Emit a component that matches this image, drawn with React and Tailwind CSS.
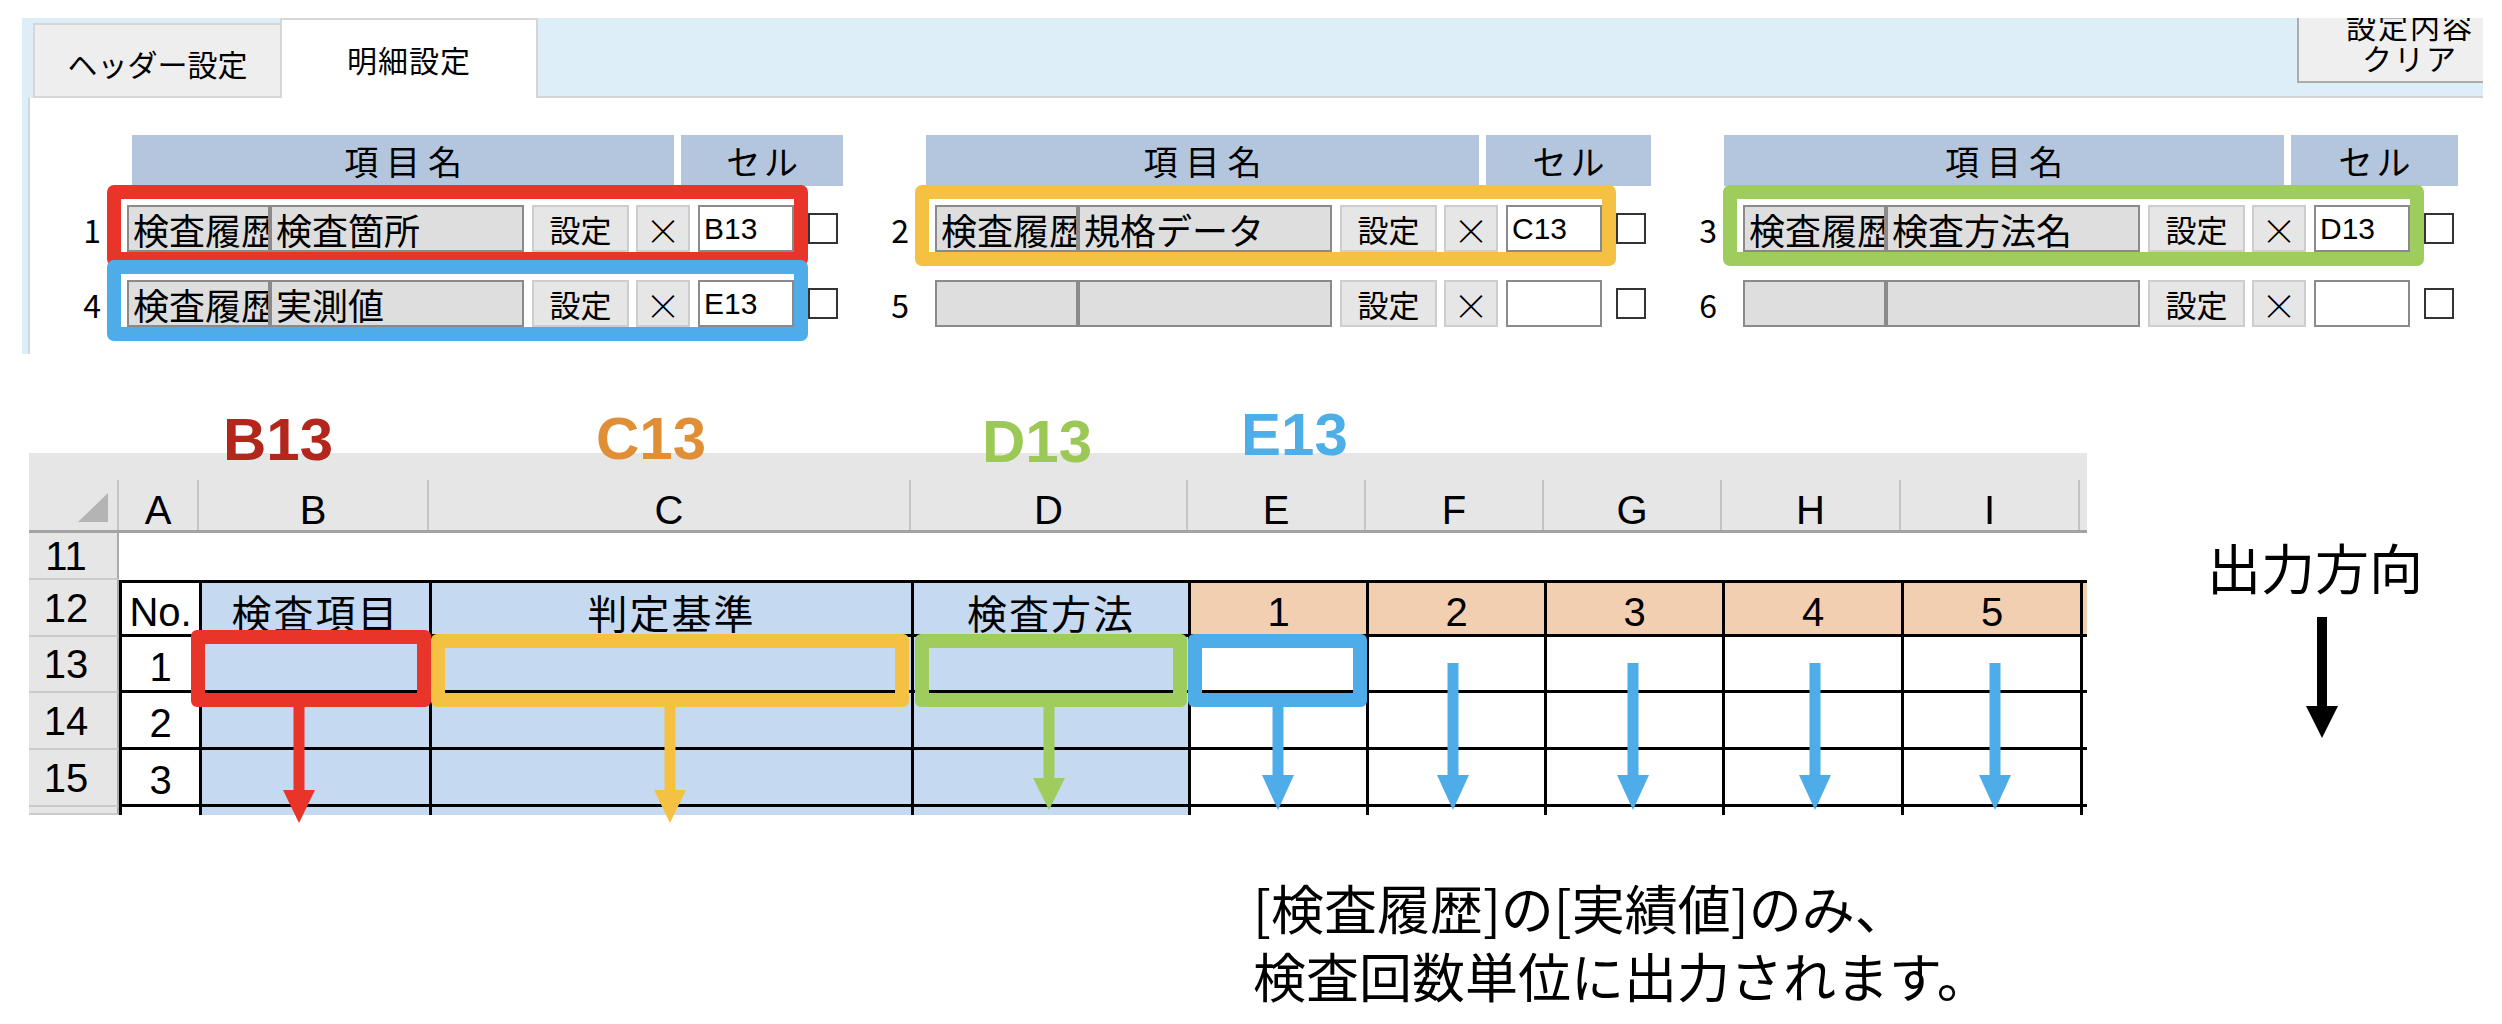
import React from "react";

// top panel rows (two rows x three groups)
const topRows = [
  { no: 1, kind: "検査履歴", item: "検査箇所", cell: "B13", ring: "border-[#e9342a]" },
  { no: 2, kind: "検査履歴", item: "規格データ", cell: "C13", ring: "border-[#f4c143]" },
  { no: 3, kind: "検査履歴", item: "検査方法名", cell: "D13", ring: "border-[#9ecd5e]" },
];
const bottomRows = [
  { no: 4, kind: "検査履歴", item: "実測値", cell: "E13", ring: "border-[#4eade9]" },
  { no: 5 },
  { no: 6 },
];
const groups = [
  { head: "ml-[65px]", rows: [topRows[0], bottomRows[0]] },
  { head: "ml-[51px]", rows: [topRows[1], bottomRows[1]] },
  { head: "ml-[41px]", rows: [topRows[2], bottomRows[2]] },
];

// sheet columns
const colW = [
  "w-[80px]",
  "w-[230px]",
  "w-[482px]",
  "w-[277px]",
  "w-[178px]",
  "w-[178px]",
  "w-[178px]",
  "w-[179px]",
  "w-[179px]",
  "w-[7px]",
];
const letters = ["A", "B", "C", "D", "E", "F", "G", "H", "I", ""];

const dataRows = [
  { n: "12", h: "h-[57px]", head: true, vals: ["No.", "検査項目", "判定基準", "検査方法", "1", "2", "3", "4", "5", ""] },
  { n: "13", h: "h-[56px]", vals: ["1"] },
  { n: "14", h: "h-[57px]", vals: ["2"] },
  { n: "15", h: "h-[57px]", vals: ["3"] },
  { n: "", h: "h-[8px]", last: true, vals: [] },
];

const arrows = [
  { cx: 270, y1: 254, head: 337, tip: 370, c: "#e9342a" },
  { cx: 641, y1: 254, head: 337, tip: 370, c: "#f4c143" },
  { cx: 1020, y1: 254, head: 325, tip: 357, c: "#9ecd5e" },
  { cx: 1249, y1: 254, head: 322, tip: 357, c: "#4eade9" },
  { cx: 1424, y1: 210, head: 322, tip: 357, c: "#4eade9" },
  { cx: 1604, y1: 210, head: 322, tip: 357, c: "#4eade9" },
  { cx: 1786, y1: 210, head: 322, tip: 357, c: "#4eade9" },
  { cx: 1966, y1: 210, head: 322, tip: 357, c: "#4eade9" },
];

const isAscii = (s) => /^[\x00-\x7F]*$/.test(s);

const GreyField = ({ className, children }) => (
  <div
    className={`${className} h-full bg-[#dedede] border-2 border-[#8a8a8a] overflow-hidden whitespace-nowrap pl-[4px] flex items-center text-[36px] leading-none`}
  >
    {children}
  </div>
);

const FieldRow = ({ row, className }) => (
  <div className={`flex items-center h-[47px] ${className}`}>
    <div className="w-[60px] pr-[26px] text-right text-[32px] leading-none">{row.no}</div>
    <div className="relative flex h-full">
      <GreyField className="w-[143px]">{row.kind}</GreyField>
      <GreyField className="w-[254px]">{row.item}</GreyField>
      <div className="ml-[8px] w-[97px] h-full bg-[#e6e6e6] border-2 border-[#cdcdcd] flex items-center justify-center text-[31px] leading-none">
        設定
      </div>
      <div className="ml-[7px] w-[54px] h-full bg-[#e6e6e6] border-2 border-[#cdcdcd] flex items-center justify-center text-[36px] leading-none font-light">
        ×
      </div>
      <div className="ml-[8px] w-[96px] h-full bg-white border-2 border-[#8a8a8a] pl-[4px] flex items-center text-[30px] leading-none font-['Liberation_Sans',sans-serif]">
        {row.cell}
      </div>
      {row.ring && (
        <div
          className={`absolute -left-[20px] -top-[20px] -right-[14px] -bottom-[14px] border-[14px] rounded-[7px] ${row.ring}`}
        />
      )}
    </div>
    <div className="ml-[14px] w-[30px] h-[31px] border-2 border-[#333333] bg-white" />
  </div>
);

const Group = ({ group }) => (
  <div className="flex flex-col w-[776px]">
    <div className={`flex gap-[7px] h-[51px] ${group.head}`}>
      <div className="w-[560px] bg-[#b4c5de] flex items-center justify-center text-[34px] leading-none tracking-[8px] pl-[8px]">
        項目名
      </div>
      <div className="w-[167px] bg-[#b4c5de] flex items-center justify-center text-[34px] leading-none tracking-[4px] pl-[4px]">
        セル
      </div>
    </div>
    <FieldRow row={group.rows[0]} className="mt-[19px]" />
    <FieldRow row={group.rows[1]} className="mt-[28px]" />
  </div>
);

const Panel = () => (
  <div className="ml-[22px] w-[2461px] h-[336px] overflow-hidden">
    {/* tab strip */}
    <div className="flex h-[80px] bg-[#ddeef9]">
      <div className="ml-[11px] mt-[5px] w-[247px] h-[75px] bg-[#eeeeee] border-t-2 border-l-2 border-b-2 border-[#d6d6d6] flex items-center justify-center text-[30px] leading-none pt-[4px]">
        ヘッダー設定
      </div>
      <div className="w-[258px] h-[80px] bg-white border-t-2 border-x-2 border-[#d6d6d6] flex items-center justify-center text-[30px] leading-none tracking-[1px]">
        明細設定
      </div>
      <div className="flex-1 h-[80px] border-b-2 border-[#d4d4d4] flex justify-end items-start">
        <div className="-mt-[20px] -mr-[40px] w-[226px] h-[85px] bg-[#efefef] border-2 border-[#acacac] flex flex-col items-center justify-center text-[30px] leading-[32px] tracking-[2px]">
          <span>設定内容</span>
          <span>クリア</span>
        </div>
      </div>
    </div>
    {/* content */}
    <div className="flex h-[256px] bg-[#ddeef9] pl-[6px]">
      <div className="flex-1 bg-white border-l-2 border-[#cfd8e0] pl-[37px] pt-[37px] flex gap-[32px]">
        {groups.map((g, i) => (
          <Group key={i} group={g} />
        ))}
      </div>
    </div>
  </div>
);

const Sheet = () => (
  <div className="relative ml-[29px] w-[2058px] h-[362px]">
    {/* column letters */}
    <div className="flex items-end h-[80px] bg-[#e6e6e6] border-b-[3px] border-[#a3a3a3]">
      <div className="w-[90px] h-[50px] border-r-2 border-[#c4c4c4] flex items-end justify-end pr-[9px] pb-[8px]">
        <svg width="30" height="29" viewBox="0 0 30 29">
          <polygon points="30,0 30,29 0,29" fill="#b4b4b4" />
        </svg>
      </div>
      {letters.map((l, i) => (
        <div
          key={i}
          className={`${colW[i]} h-[50px] ${
            i < 9 ? "border-r-2 border-[#c4c4c4]" : ""
          } flex items-end justify-center text-[40px] leading-[40px] font-['Liberation_Sans_Narrow','Liberation_Sans',sans-serif]`}
        >
          {l}
        </div>
      ))}
    </div>
    {/* row 11 */}
    <div className="flex h-[47px]">
      <div className="w-[90px] h-full bg-[#e6e6e6] border-r-2 border-r-[#a9a9a9] border-b-2 border-b-[#cacaca] flex items-center justify-center pr-[14px] text-[40px] leading-none font-['Liberation_Sans_Narrow','Liberation_Sans',sans-serif]">
        11
      </div>
      <div className="flex-1 bg-white" />
    </div>
    {dataRows.map((r, ri) => (
      <div key={ri} className={`flex ${r.h}`}>
        <div className="w-[90px] h-full bg-[#e6e6e6] border-r-2 border-r-[#a9a9a9] border-b-2 border-b-[#cacaca] flex items-center justify-center pr-[14px] text-[40px] leading-none font-['Liberation_Sans_Narrow','Liberation_Sans',sans-serif]">
          {r.n}
        </div>
        {colW.map((w, ci) => {
          const v = r.vals[ci] || "";
          const bg =
            ci >= 1 && ci <= 3
              ? "bg-[#c5d9f1]"
              : ci >= 4 && r.head
              ? "bg-[#f3cfb2]"
              : "bg-white";
          const font = isAscii(v)
            ? "font-['Liberation_Sans_Narrow','Liberation_Sans',sans-serif] text-[40px]"
            : "text-[40px] tracking-[2px]";
          return (
            <div
              key={ci}
              className={`${w} h-full border-l-[3px] border-black ${r.last ? "" : "border-b-[3px]"} ${
                r.head ? "border-t-[3px]" : ""
              } ${bg} ${font} leading-none flex items-center justify-center pt-[6px] overflow-hidden whitespace-nowrap`}
            >
              {v}
            </div>
          );
        })}
      </div>
    ))}

    {/* highlight boxes on row 13 */}
    <div className="absolute left-[162px] top-[177px] w-[240px] h-[77px] border-[14px] border-[#e9342a] rounded-[6px]" />
    <div className="absolute left-[402px] top-[181px] w-[478px] h-[73px] border-[14px] border-[#f4c143] rounded-[6px]" />
    <div className="absolute left-[886px] top-[181px] w-[272px] h-[73px] border-[14px] border-[#9ecd5e] rounded-[6px]" />
    <div className="absolute left-[1159px] top-[181px] w-[179px] h-[73px] border-[14px] border-[#4eade9] rounded-[6px]" />

    {/* output arrows */}
    <svg
      className="absolute left-0 top-0 overflow-visible pointer-events-none"
      width="2058"
      height="380"
      viewBox="0 0 2058 380"
    >
      {arrows.map((a, i) => (
        <g key={i} fill={a.c}>
          <rect x={a.cx - 5.5} y={a.y1} width="11" height={a.head - a.y1 + 1} />
          <polygon points={`${a.cx - 16},${a.head} ${a.cx + 16},${a.head} ${a.cx},${a.tip}`} />
        </g>
      ))}
    </svg>
  </div>
);

const App = () => {
  return (
    <div className="w-[2502px] min-h-[1024px] bg-white text-black pt-[18px] font-['Noto_Sans_CJK_JP','Noto_Sans',sans-serif]">
      <Panel />

      <div className="mt-[46px]">
        {/* cell labels, drawn over the sheet's header band */}
        <div className="relative z-10 flex h-[53px] font-['Liberation_Sans',sans-serif] font-bold text-[60px] leading-[60px]">
          <div className="w-[596px] pl-[223px] pt-[10px] text-[#b3261c]">B13</div>
          <div className="w-[386px] pt-[9px] text-[#e08f36]">C13</div>
          <div className="w-[259px] pt-[12px] text-[#9cc956]">D13</div>
          <div className="pt-[5px] text-[#4daee8]">E13</div>
        </div>

        <div className="flex">
          <Sheet />
          <div className="pl-[120px] pt-[87px] flex flex-col">
            <div className="text-[54px] leading-none">出力方向</div>
            <svg className="ml-[99px] mt-[23px]" width="32" height="121" viewBox="0 0 32 121">
              <rect x="11" y="0" width="10" height="90" fill="#000" />
              <polygon points="0,89 32,89 16,121" fill="#000" />
            </svg>
          </div>
        </div>

        <p className="ml-[1253px] mt-[58px] text-[53px] leading-[68px]">
          [検査履歴]の[実績値]のみ、
          <br />
          検査回数単位に出力されます。
        </p>
      </div>
    </div>
  );
};

export default App;
